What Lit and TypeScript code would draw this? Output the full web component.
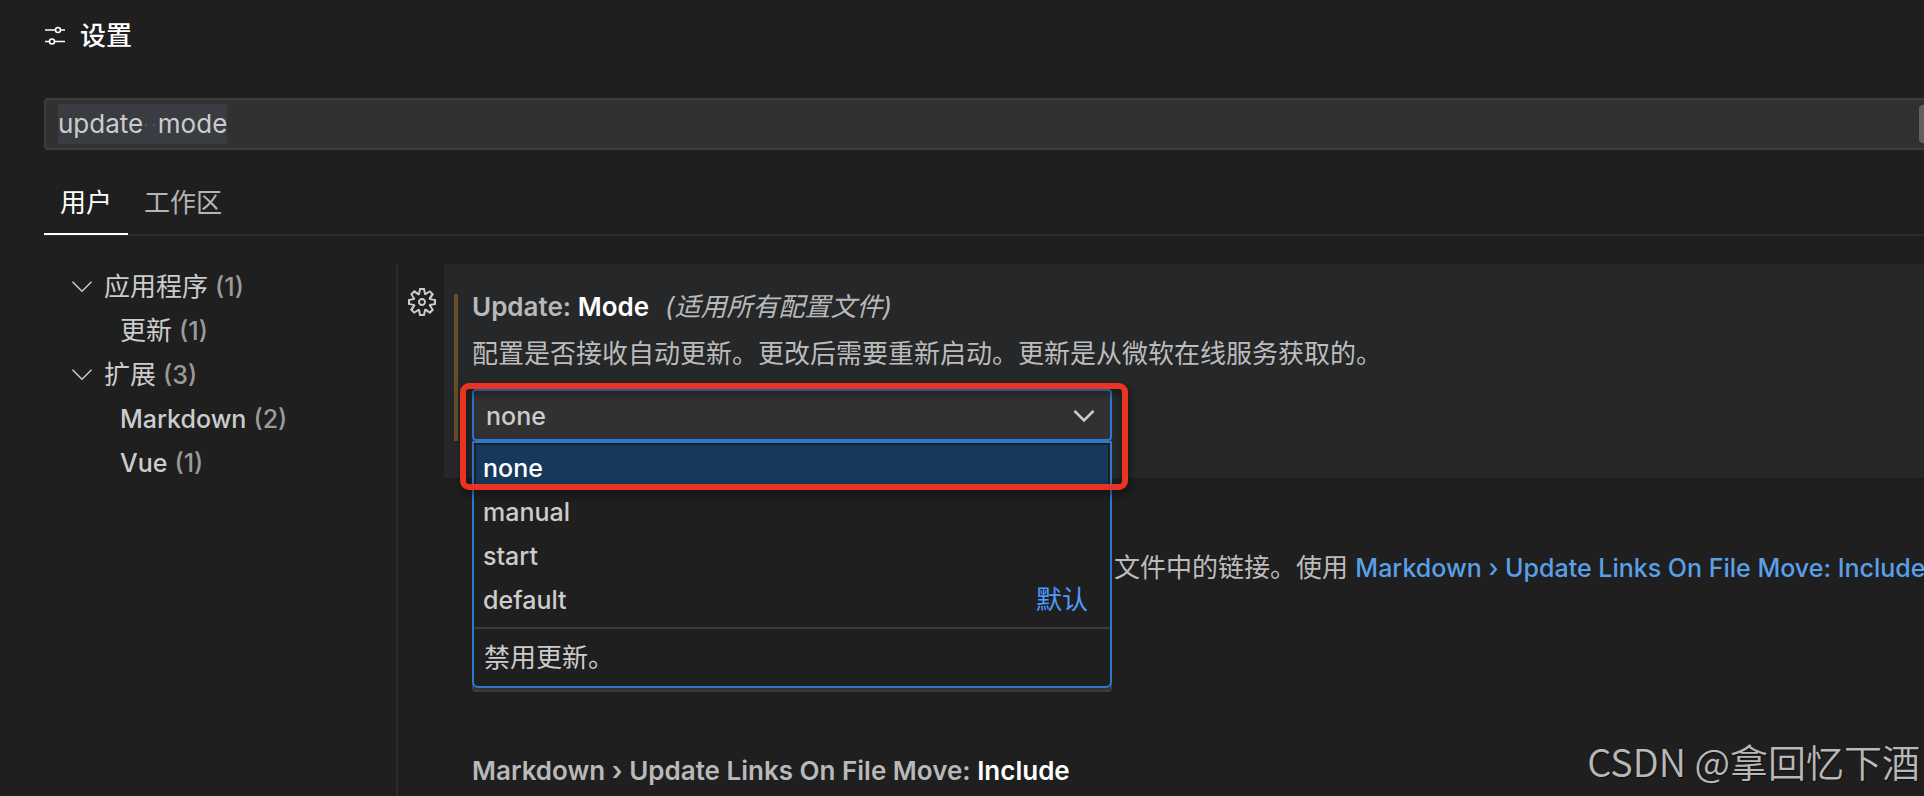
import { LitElement, html, css, svg } from "lit";
import { customElement, state, query } from "lit/decorators.js";
import { classMap } from "lit/directives/class-map.js";

interface TocEntry {
  label: string;
  count: number;
  group: boolean;
  latin: boolean;
}

const TOC: TocEntry[] = [
  { label: "应用程序", count: 1, group: true, latin: false },
  { label: "更新", count: 1, group: false, latin: false },
  { label: "扩展", count: 3, group: true, latin: false },
  { label: "Markdown", count: 2, group: false, latin: true },
  { label: "Vue", count: 1, group: false, latin: true },
];

const MODES = ["none", "manual", "start", "default"];

const chevron = (width: number) => html`
  <svg class="chevron" width="22" height="14" viewBox="0 0 22 14" aria-hidden="true">
    ${svg`<path d="M1.5 1.8 11 11.3 20.5 1.8" fill="none" stroke="currentColor" stroke-width=${width}></path>`}
  </svg>
`;

@customElement("app-root")
export class AppRoot extends LitElement {
  @state() private mode = "none";
  @state() private tab = "user";
  @query(".search-input") private searchInput!: HTMLInputElement;

  static styles = css`
    :host {
      display: block;
      min-height: 100vh;
      box-sizing: border-box;
      overflow: hidden;
      position: relative;
      background: #1f1f1f;
      color: #cccccc;
      font-family: Inter, "Noto Sans CJK SC", sans-serif;
      font-size: 26px;
      line-height: 36px;
    }
    * {
      box-sizing: border-box;
    }
    button,
    input,
    select {
      font: inherit;
      color: inherit;
      margin: 0;
      padding: 0;
      border: 0;
      border-radius: 0;
      background: none;
      outline: none;
      text-align: left;
    }
    h1,
    h2,
    p,
    ul {
      margin: 0;
      padding: 0;
      font: inherit;
      list-style: none;
    }
    .latin {
      font-size: 25px;
      font-weight: 450;
    }
    .page {
      height: 100vh;
      display: flex;
      flex-direction: column;
    }
    .title {
      display: flex;
      align-items: center;
      gap: 14px;
      height: 72px;
      padding-left: 44px;
      color: #ffffff;
      font-weight: 500;
    }
    .search {
      display: flex;
      align-items: center;
      position: relative;
      height: 52px;
      margin: 26px 0 0 44px;
      padding-left: 12px;
      border: 2px solid #3c3c3c;
      border-right: 0;
      border-radius: 4px 0 0 4px;
      background: #313131;
    }
    .search-input {
      flex: 1;
      height: 40px;
      line-height: 40px;
      caret-color: transparent;
    }
    .search-input::selection {
      background: rgba(58, 61, 65, 0.99);
      color: #cccccc;
    }
    .spaces {
      position: absolute;
      left: 99px;
      top: 24px;
      display: flex;
      gap: 6px;
    }
    .spaces i {
      width: 2px;
      height: 2px;
      background: #585858;
    }
    .clear {
      width: 5px;
      height: 38px;
      border-radius: 4px 0 0 4px;
      background: #616161;
    }
    .tabs {
      display: flex;
      height: 60px;
      margin: 26px 0 0 44px;
      border-bottom: 2px solid #2b2b2b;
    }
    .tab {
      height: 59px;
      padding: 0 16px 5px;
      color: #b5b5b5;
    }
    .tab.active {
      color: #ffffff;
      border-bottom: 2px solid #ffffff;
      padding-bottom: 3px;
    }
    .body {
      flex: 1;
      min-height: 0;
      display: flex;
      margin-top: 28px;
    }
    .toc {
      width: 398px;
      flex: none;
      border-right: 2px solid #2b2b2b;
      padding: 1px 0 0 71px;
    }
    .toc button {
      display: flex;
      align-items: center;
      width: 100%;
      height: 44px;
      gap: 7px;
      white-space: nowrap;
    }
    .toc .chevron {
      margin-right: 4px;
    }
    .toc .leaf {
      padding-left: 49px;
    }
    .count {
      color: #9a9a9a;
    }
    .settings {
      flex: 1;
      min-width: 0;
      overflow: hidden;
    }
    .row {
      display: flex;
    }
    .gutter {
      width: 46px;
      flex: none;
      padding: 22px 0 0 8px;
    }
    .gear {
      display: block;
      width: 32px;
      height: 32px;
    }
    .setting {
      position: relative;
      flex: 1;
      min-width: 0;
      height: 214px;
      padding: 24px 0 0 28px;
    }
    .setting.tall {
      height: 250px;
    }
    .setting.hover {
      background: #262728;
    }
    .setting.modified::before {
      content: "";
      position: absolute;
      left: 10px;
      top: 30px;
      width: 4px;
      height: 147px;
      background: #664f28;
    }
    .heading {
      display: flex;
      align-items: center;
      height: 38px;
      font-weight: 600;
      white-space: pre;
      color: #b9b9b9;
    }
    .heading b {
      font-weight: 600;
      color: #ffffff;
    }
    .heading em {
      font-weight: 400;
      padding-left: 16px;
    }
    .desc {
      padding: 10px 0 17px;
      white-space: nowrap;
      color: #bcbcbc;
    }
    .desc.behind {
      height: 100px;
      padding-left: 642px;
    }
    .desc a {
      color: #5a9fe8;
      text-decoration: none;
    }
    .picker {
      position: relative;
      width: 640px;
    }
    .picker select {
      display: block;
      appearance: none;
      width: 100%;
      height: 52px;
      padding: 1px 48px 0 12px;
      border: 2px solid #3c3c3c;
      border-radius: 4px;
      background: #313131;
    }
    .picker.open select {
      border-color: #2f78d0;
    }
    .picker .arrow {
      position: absolute;
      right: 17px;
      top: 20px;
      display: flex;
      pointer-events: none;
    }
    .menu {
      position: absolute;
      z-index: 2;
      left: 0;
      top: 52px;
      width: 640px;
      border: 2px solid #2f78d0;
      border-radius: 0 0 6px 6px;
      background: #1f1f1f;
    }
    .menu ul {
      padding: 2px 2px 6px;
    }
    .option {
      display: flex;
      align-items: center;
      justify-content: space-between;
      width: 100%;
      height: 44px;
      padding: 2px 20px 0 7px;
    }
    .option.selected {
      background: #16395b;
      color: #ffffff;
    }
    .option .tag {
      color: #4f9bff;
    }
    .note {
      padding: 11px 10px 10px;
      border-top: 2px solid #3c3c3c;
    }
    .mark {
      position: absolute;
      z-index: 3;
      left: -12px;
      right: -16px;
      top: -6px;
      height: 107px;
      border: 6px solid #eb3323;
      border-radius: 9px;
      filter: drop-shadow(2px 4px 4px rgba(0, 0, 0, 0.5));
      pointer-events: none;
    }
    .watermark {
      position: absolute;
      right: 4px;
      bottom: 11px;
      font-family: "Noto Sans CJK SC", sans-serif;
      font-size: 38px;
      font-weight: 350;
      line-height: 48px;
      color: #b8b8b8;
      text-shadow: 1px 1px 1px rgba(0, 0, 0, 0.5);
    }
  `;

  firstUpdated() {
    this.searchInput.focus();
    this.searchInput.select();
  }

  private renderTab(id: string, label: string) {
    return html`<button
      class=${classMap({ tab: true, active: this.tab === id })}
      role="tab"
      aria-selected=${this.tab === id}
      @click=${() => (this.tab = id)}
    >${label}</button>`;
  }

  private renderToc(entry: TocEntry) {
    return html`<li>
      <button class=${classMap({ leaf: !entry.group })}>
        ${entry.group ? chevron(1.5) : ""}
        <span class=${classMap({ latin: entry.latin })}>${entry.label}</span>
        <span class="count latin">(${entry.count})</span>
      </button>
    </li>`;
  }

  private renderOption(name: string) {
    return html`<li>
      <button
        class=${classMap({ option: true, selected: this.mode === name })}
        role="option"
        aria-selected=${this.mode === name}
        @click=${() => (this.mode = name)}
      >
        <span class="latin">${name}</span>
        ${name === "default" ? html`<span class="tag">默认</span>` : ""}
      </button>
    </li>`;
  }

  render() {
    return html`
      <div class="page">
        <h1 class="title">
          <svg width="22" height="20" viewBox="0 0 22 20" fill="none" stroke="currentColor" stroke-width="1.6" aria-hidden="true">
            <path d="M1 4H11.500M16.500 4H21M1 15.500H5.500M10.500 15.500H21"></path>
            <circle cx="14" cy="4" r="2.500"></circle>
            <circle cx="8" cy="15.500" r="2.500"></circle>
          </svg>
          设置
        </h1>

        <div class="search">
          <input class="search-input" type="text" aria-label="搜索设置" .value=${"update  mode"} />
          <span class="spaces" aria-hidden="true"><i></i><i></i></span>
          <button class="clear" aria-label="清除"></button>
        </div>

        <div class="tabs" role="tablist">
          ${this.renderTab("user", "用户")}${this.renderTab("workspace", "工作区")}
        </div>

        <div class="body">
          <ul class="toc">
            ${TOC.map((e) => this.renderToc(e))}
          </ul>

          <div class="settings">
            <div class="row">
              <div class="gutter">
                <button class="gear" aria-label="更多操作">
                  <svg width="32" height="32" viewBox="0 0 16 16" fill="currentColor">
                    <path fill-rule="evenodd" clip-rule="evenodd" d="M9.1 4.4L8.6 2H7.4l-.5 2.4-.7.3-2-1.3-.9.8 1.3 2-.2.7-2.4.5v1.2l2.4.5.3.8-1.3 2 .8.8 2-1.3.8.3.4 2.3h1.2l.5-2.4.8-.3 2 1.3.8-.8-1.3-2 .3-.8 2.3-.4V7.4l-2.4-.5-.3-.8 1.3-2-.8-.8-2 1.3-.7-.2zM9.4 1l.5 2.4L12 2.1l2 2-1.4 2.1 2.4.4v2.8l-2.4.5L14 12l-2 2-2.1-1.4-.5 2.4H6.6l-.5-2.4L4 13.900l-2-2 1.400-2.100L1 9.400V6.600l2.400-.5L2.100 4l2-2 2.100 1.400.4-2.400h2.800zm.6 7c0 1.100-.9 2-2 2s-2-.9-2-2 .9-2 2-2 2 .9 2 2zM8 9c.6 0 1-.4 1-1s-.4-1-1-1-1 .4-1 1 .4 1 1 1z"></path>
                  </svg>
                </button>
              </div>
              <section class="setting hover modified">
                <h2 class="heading"><span>Update: <b>Mode</b></span><em>(适用所有配置文件)</em></h2>
                <p class="desc">配置是否接收自动更新。更改后需要重新启动。更新是从微软在线服务获取的。</p>
                <div class="picker open">
                  <select class="latin" aria-label="Update: Mode" .value=${this.mode}>
                    ${MODES.map((m) => html`<option value=${m} ?selected=${m === this.mode}>${m}</option>`)}
                  </select>
                  <span class="arrow">${chevron(2.6)}</span>
                  <div class="menu">
                    <ul role="listbox" aria-label="Update: Mode">
                      ${MODES.map((m) => this.renderOption(m))}
                    </ul>
                    <p class="note">禁用更新。</p>
                  </div>
                  <div class="mark"></div>
                </div>
              </section>
            </div>

            <div class="row">
              <div class="gutter"></div>
              <section class="setting tall">
                <h2 class="heading"></h2>
                <p class="desc behind">文件中的链接。使用 <a class="latin" href="#include">Markdown › Update Links On File Move: Include</a></p>
                <div class="picker">
                  <select aria-label="Update Links On File Move"><option></option></select>
                </div>
              </section>
            </div>

            <div class="row" id="include">
              <div class="gutter"></div>
              <section class="setting">
                <h2 class="heading"><span>Markdown › Update Links On File Move: <b>Include</b></span></h2>
              </section>
            </div>
          </div>
        </div>
      </div>
      <div class="watermark">CSDN @拿回忆下酒</div>
    `;
  }
}
